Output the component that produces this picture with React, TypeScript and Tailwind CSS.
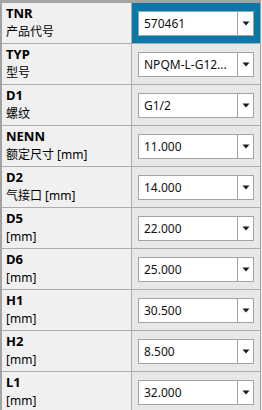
import React from "react";

type Row = {
  code: string;
  name: string;
  value: string;
};

const rows: Row[] = [
  { code: "TNR", name: "产品代号", value: "570461" },
  { code: "TYP", name: "型号", value: "NPQM-L-G12..." },
  { code: "D1", name: "螺纹", value: "G1/2" },
  { code: "NENN", name: "额定尺寸 [mm]", value: "11.000" },
  { code: "D2", name: "气接口 [mm]", value: "14.000" },
  { code: "D5", name: "[mm]", value: "22.000" },
  { code: "D6", name: "[mm]", value: "25.000" },
  { code: "H1", name: "[mm]", value: "30.500" },
  { code: "H2", name: "[mm]", value: "8.500" },
  { code: "L1", name: "[mm]", value: "32.000" },
];

const Arrow: React.FC = () => (
  <svg width="8" height="5" viewBox="0 0 8 5">
    <path d="M0.5 0.5 H7.5 L4 4.5 Z" fill="#1a1a1a" />
  </svg>
);

const Dropdown: React.FC<{ value: string }> = ({ value }) => (
  <div className="flex h-[25px] w-full border border-[#a3a3a3] bg-white">
    <div className="flex min-w-0 flex-1 items-center pl-[5px] pr-[2px] text-[12px] leading-[18px] text-[#111]">
      <span className="truncate">{value}</span>
    </div>
    <div className="flex w-[16px] items-center justify-center border-l border-[#a3a3a3]">
      <Arrow />
    </div>
  </div>
);

export default function App() {
  return (
    <div className="h-[410px] w-[262px] overflow-hidden bg-[#ececec] font-['Noto_Sans','Noto_Sans_CJK_SC',sans-serif]">
      <div className="w-[261px] border-l-2 border-t-[3px] border-[#a3a3a3]">
        {rows.map((row, i) => (
          <div key={row.code} className="flex h-[41px] border-b border-[#acacac]">
            <div className="w-[130px] shrink-0 border-r border-[#acacac] bg-[#f0f0f0] pl-[4px] pt-[1px] text-black">
              <div className="text-[13px] font-bold leading-[18px]">{row.code}</div>
              <div className="text-[12px] leading-[19px]">{row.name}</div>
            </div>
            <div
              className={
                i === 0
                  ? "flex flex-1 items-start border-r border-[#a3a3a3] bg-[#0878a8] px-[6px] pt-[8px]"
                  : "flex flex-1 items-start border-r border-[#a3a3a3] bg-[#e8e8e8] px-[6px] pt-[8px]"
              }
            >
              <Dropdown value={row.value} />
            </div>
          </div>
        ))}
      </div>
    </div>
  );
}
